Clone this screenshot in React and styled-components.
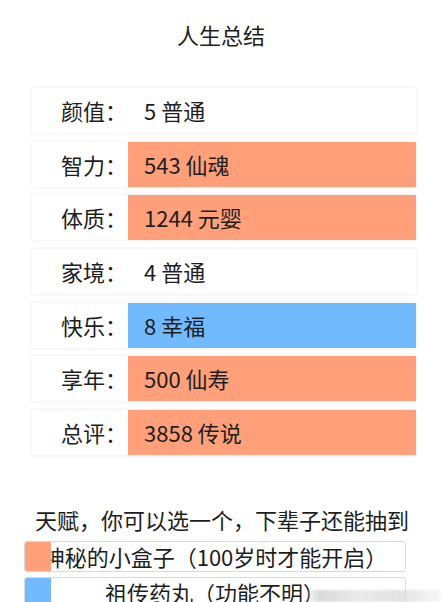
import React from "react";
import styled, { createGlobalStyle } from "styled-components";

const Global = createGlobalStyle`
  html, body { margin: 0; padding: 0; background: #fff; }
  body {
    font-family: "Noto Sans CJK SC", "Noto Sans", sans-serif;
    color: #1e1e1e;
    width: 442px;
    height: 602px;
    overflow: hidden;
  }
`;

const Page = styled.div`
  position: relative;
  width: 442px;
  height: 602px;
  overflow: hidden;
  display: flex;
  flex-direction: column;
`;

const Title = styled.h1`
  margin: 20px 0 0;
  font-size: 22px;
  font-weight: 400;
  line-height: 28px;
  text-align: center;
`;

const StatList = styled.ul`
  list-style: none;
  margin: 40px 0 0 32px;
  padding: 0;
  width: 384px;
  display: flex;
  flex-direction: column;
  gap: 8.67px;
`;

const StatRow = styled.li`
  display: flex;
  height: 45px;
  background: #fff;
  box-shadow: 0 0 4px rgba(0, 0, 0, 0.09);
  font-size: 22px;
  line-height: 45px;
`;

const Label = styled.span`
  width: 96px;
  flex: none;
  padding-left: 29px;
  box-sizing: border-box;
  white-space: nowrap;
`;

const Value = styled.span`
  flex: 1;
  padding-left: 16px;
  background: ${(p) => p.$bg || "#fff"};
  white-space: nowrap;
`;

const Heading = styled.div`
  margin: 50px 0 0;
  font-size: 22px;
  line-height: 28px;
  text-align: center;
  padding-left: 2px;
`;

const TalentList = styled.ul`
  list-style: none;
  margin: 8px 0 0 24px;
  padding: 0;
  width: 382px;
  display: flex;
  flex-direction: column;
  gap: 5px;
`;

const Talent = styled.li`
  position: relative;
  height: 31px;
  box-sizing: border-box;
  border: 1px solid #d9d9d9;
  border-radius: 3px;
  font-size: 22px;
  line-height: 29px;
  display: flex;
  justify-content: center;
  white-space: nowrap;
  overflow: hidden;
`;

const Swatch = styled.span`
  position: absolute;
  left: -1px;
  top: -1px;
  bottom: -1px;
  width: 27px;
  border-radius: 3px 0 0 3px;
  background: ${(p) => p.$bg};
`;

const Watermark = styled.div`
  position: absolute;
  right: 0;
  bottom: 0;
  width: 138px;
  height: 12px;
  background: linear-gradient(
    90deg,
    rgba(200, 200, 200, 0) 0%,
    rgba(205, 205, 205, 0.75) 12%,
    rgba(230, 230, 230, 0.8) 40%,
    rgba(215, 215, 215, 0.7) 70%,
    rgba(235, 235, 235, 0.3) 100%
  );
  filter: blur(1px);
`;

const ORANGE = "#ffa07a";
const BLUE = "#72bafe";

const stats = [
  ["颜值：", "5 普通", null],
  ["智力：", "543 仙魂", ORANGE],
  ["体质：", "1244 元婴", ORANGE],
  ["家境：", "4 普通", null],
  ["快乐：", "8 幸福", BLUE],
  ["享年：", "500 仙寿", ORANGE],
  ["总评：", "3858 传说", ORANGE],
];

const talents = [
  ["神秘的小盒子（100岁时才能开启）", ORANGE],
  ["祖传药丸（功能不明）", BLUE],
];

export default function App() {
  return (
    <Page>
      <Global />
      <Title>人生总结</Title>
      <StatList>
        {stats.map(([l, v, c]) => (
          <StatRow key={l}>
            <Label>{l}</Label>
            <Value $bg={c}>{v}</Value>
          </StatRow>
        ))}
      </StatList>
      <Heading>天赋，你可以选一个，下辈子还能抽到</Heading>
      <TalentList>
        {talents.map(([t, c]) => (
          <Talent key={t}>
            <span>{t}</span>
            <Swatch $bg={c} />
          </Talent>
        ))}
      </TalentList>
      <Watermark />
    </Page>
  );
}
